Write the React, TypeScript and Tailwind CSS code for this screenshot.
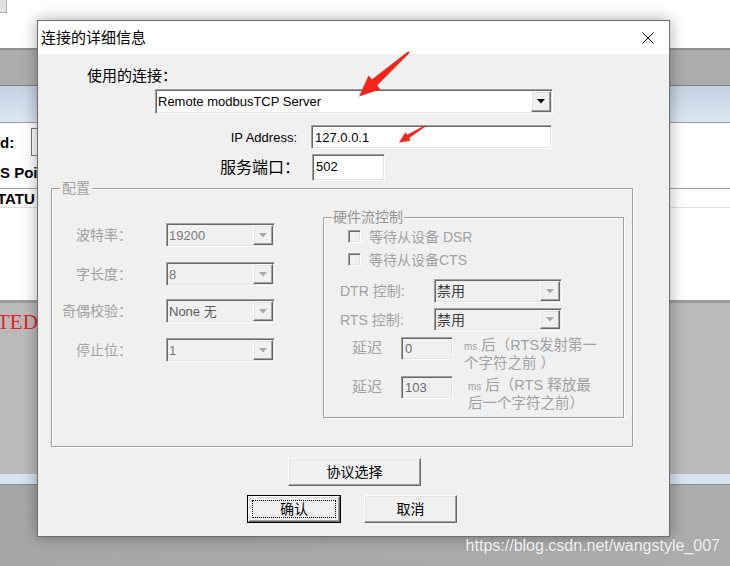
import React from 'react'

const sunken =
  'border border-t-[#a0a0a0] border-l-[#a0a0a0] border-b-white border-r-white shadow-[inset_1px_1px_0_#696969,inset_-1px_-1px_0_#e3e3e3]'
const raised =
  'border border-t-white border-l-white border-b-[#696969] border-r-[#696969] shadow-[inset_-1px_-1px_0_#a0a0a0,inset_1px_1px_0_#e3e3e3]'
const etched = 'border border-[#a0a0a0] shadow-[inset_1px_1px_0_#fff,1px_1px_0_#fff]'

function Combo({ value, className, textClass, arrow }: { value: string; className: string; textClass: string; arrow: string }) {
  return (
    <div className={`flex items-stretch p-[1px] ${sunken} ${className}`}>
      <div className={`flex-1 flex items-center pl-[1px] leading-none ${textClass}`}>{value}</div>
      <div className={`w-[20px] flex items-center justify-center bg-[#f0f0f0] ${raised}`}>
        <svg width="8" height="5" viewBox="0 0 8 5">
          <path d="M0 0h8L4 4.5z" fill={arrow} />
        </svg>
      </div>
    </div>
  )
}

function Field({ value, className, textClass }: { value: string; className: string; textClass: string }) {
  return (
    <div className={`flex items-center pl-[3px] ${sunken} ${className}`}>
      <span className={`leading-none ${textClass}`}>{value}</span>
    </div>
  )
}

function Check({ label }: { label: string }) {
  return (
    <div className="flex items-center h-[13px] ml-[24px]">
      <div className={`w-[13px] h-[13px] bg-[#f0f0f0] ${sunken}`} />
      <span className="ml-[8px] text-[14px] leading-none text-[#a0a0a0]">{label}</span>
    </div>
  )
}

function Button({ label, className, isDefault }: { label: string; className: string; isDefault?: boolean }) {
  if (isDefault) {
    return (
      <div className={`border border-black ${className}`}>
        <div className={`h-full flex items-center justify-center bg-[#f0f0f0] ${raised}`}>
          <div className="w-[84px] h-[18px] border border-dotted border-black flex items-center justify-center text-[14px] leading-none">
            {label}
          </div>
        </div>
      </div>
    )
  }
  return (
    <div className={`flex items-center justify-center bg-[#f0f0f0] text-[14px] leading-none ${raised} ${className}`}>
      {label}
    </div>
  )
}

function ConfigRow({ label, value, className, valueClass }: { label: string; value: string; className: string; valueClass: string }) {
  return (
    <div className={`flex items-center h-[24px] ${className}`}>
      <div className="w-[80px] text-right text-[14px] text-[#a0a0a0] leading-none">{label}</div>
      <Combo value={value} className="ml-[34px] w-[109px] h-[24px]" textClass={`text-[13px] ${valueClass}`} arrow="#a8a8a8" />
    </div>
  )
}

function Background() {
  return (
    <div className="flex flex-col h-full">
      <div className="h-[48px] bg-white">
        <div className="w-[7px] h-[13px] bg-[#e1e1e1] border-r border-b border-[#adadad]" />
      </div>
      <div className="h-[38px] bg-[#acacac] border-t-2 border-t-[#919191] border-b border-b-[#7d7d7d]" />
      <div className="h-[37px] bg-gradient-to-b from-[#c3d2e1] to-[#dce7f2] border-b border-[#9a9a9a]" />
      <div className="h-[177px] bg-white font-bold text-[15px] text-black">
        <div className="h-[38px] flex items-center">
          <span className="w-[31px] leading-none">d:</span>
          <div className="w-[20px] h-[28px] border border-[#7a7a7a] bg-white" />
        </div>
        <div className="h-[27px] flex items-center pb-[4px] leading-none">S Poi</div>
        <div className="h-[20px] flex items-center border-t border-[#a0a0a0] border-b border-b-[#dcdcdc] leading-none ml-[-3px]">
          TATU
        </div>
      </div>
      <div className="h-[174px] bg-[#bababa] border-t-[3px] border-[#9c9c9c]">
        <div className="mt-[9px] ml-[-3px] text-[21px] leading-[20px] text-[#e52222] font-['Liberation_Serif',serif]">TED</div>
      </div>
      <div className="h-[11px] bg-[#d6e3f0] border-b border-[#8a8a8a]" />
      <div className="flex-1 bg-gradient-to-r from-[#a6a6a6] to-[#acacac]" />
    </div>
  )
}

function Dialog() {
  return (
    <div className="absolute left-[37px] top-[20px] w-[633px] h-[517px] border border-[#6f6f6f] bg-[#f0f0f0] shadow-[0_0_14px_rgba(0,0,0,0.35)] flex flex-col">
      <div className="h-[33px] bg-white flex items-center justify-between pl-[3px] pr-[15px]">
        <span className="text-[15px] leading-none text-black">连接的详细信息</span>
        <svg width="12" height="12" viewBox="0 0 12 12">
          <path d="M0.5 0.5L11.5 11.5M11.5 0.5L0.5 11.5" stroke="#000" strokeWidth="1" />
        </svg>
      </div>

      <div className="flex-1 flex flex-col text-black">
        <div className="mt-[12px] ml-[49px] h-[20px] text-[15px] leading-[20px]">使用的连接：</div>
        <Combo value="Remote modbusTCP Server" className="mt-[3px] ml-[117px] w-[398px] h-[25px] bg-white" textClass="text-[13px] text-black" arrow="#000" />

        <div className="mt-[11px] flex items-center h-[24px]">
          <div className="w-[259px] text-right text-[13px] leading-none">IP Address:</div>
          <Field value="127.0.0.1" className="ml-[14px] w-[241px] h-[24px] bg-white" textClass="text-[13px]" />
        </div>
        <div className="mt-[5px] flex items-center h-[27px]">
          <div className="w-[262px] text-right text-[16px] leading-none">服务端口：</div>
          <Field value="502" className="ml-[12px] w-[73px] h-[27px] bg-white items-start pt-[5px]" textClass="text-[13px]" />
        </div>

        <div className={`relative mt-[7px] ml-[13px] w-[582px] h-[259px] flex items-start ${etched}`}>
          <span className="absolute left-[8px] top-[-11px] px-[2px] bg-[#f0f0f0] text-[14px] leading-[20px] text-[#a0a0a0]">配置</span>

          <div className="w-[271px] flex flex-col">
            <ConfigRow label="波特率：" value="19200" className="mt-[34px]" valueClass="text-[#7a7a7a]" />
            <ConfigRow label="字长度：" value="8" className="mt-[15px]" valueClass="text-[#7a7a7a]" />
            <ConfigRow label="奇偶校验：" value="None 无" className="mt-[13px]" valueClass="text-[#5c5c5c]" />
            <ConfigRow label="停止位：" value="1" className="mt-[15px]" valueClass="text-[#7a7a7a]" />
          </div>

          <div className={`relative mt-[28px] w-[301px] h-[201px] flex flex-col ${etched}`}>
            <span className="absolute left-[8px] top-[-11px] px-[1px] bg-[#f0f0f0] text-[14px] leading-[20px] text-[#939393]">硬件流控制</span>
            <div className="mt-[12px]">
              <Check label="等待从设备 DSR" />
            </div>
            <div className="mt-[10px]">
              <Check label="等待从设备CTS" />
            </div>

            <div className="mt-[13px] flex items-center h-[24px]">
              <span className="ml-[16px] w-[94px] text-[14px] leading-none text-[#a0a0a0]">DTR 控制:</span>
              <Combo value="禁用" className="w-[128px] h-[24px]" textClass="text-[14px] text-[#3c3c3c]" arrow="#a8a8a8" />
            </div>
            <div className="mt-[5px] flex items-center h-[23px]">
              <span className="ml-[16px] w-[94px] text-[14px] leading-none text-[#a0a0a0]">RTS 控制:</span>
              <Combo value="禁用" className="w-[128px] h-[23px]" textClass="text-[14px] text-[#3c3c3c]" arrow="#a8a8a8" />
            </div>

            <div className="mt-[6px] h-[32px] flex items-start">
              <span className="ml-[28px] w-[49px] h-[20px] flex items-center text-[15px] leading-none text-[#a0a0a0]">延迟</span>
              <Field value="0" className="w-[52px] h-[23px] bg-[#f0f0f0]" textClass="text-[13px] text-[#6a6a6a]" />
              <div className="ml-[11px] text-[14.5px] leading-[16px] text-[#a0a0a0]">
                <div>
                  <span className="text-[10px]">ms</span> 后（RTS发射第一
                </div>
                <div>个字符之前 ）</div>
              </div>
            </div>
            <div className="mt-[7px] flex items-start">
              <span className="ml-[28px] w-[49px] h-[20px] flex items-center text-[15px] leading-none text-[#a0a0a0]">延迟</span>
              <Field value="103" className="w-[52px] h-[23px] bg-[#f0f0f0]" textClass="text-[13px] text-[#6a6a6a]" />
              <div className="ml-[15px] mt-[1px] text-[14.5px] leading-[16px] text-[#a0a0a0]">
                <div>
                  <span className="text-[10px]">ms</span> 后（RTS 释放最
                </div>
                <div>后一个字符之前）</div>
              </div>
            </div>
          </div>
        </div>

        <Button label="协议选择" className="mt-[11px] ml-[250px] w-[133px] h-[28px]" />
        <div className="mt-[9px] ml-[209px] flex gap-[23px]">
          <Button label="确认" className="w-[94px] h-[28px]" isDefault />
          <Button label="取消" className="w-[93px] h-[28px]" />
        </div>
      </div>
    </div>
  )
}

export default function App() {
  return (
    <div className="relative w-[730px] h-[566px] overflow-hidden bg-white font-['Liberation_Sans','Noto_Sans_CJK_SC',sans-serif]">
      <Background />
      <Dialog />

      <svg className="absolute left-0 top-0 pointer-events-none" width="730" height="566" viewBox="0 0 730 566">
        <polygon
          points="409.7,52.8 377.1,85.4 380.4,89.2 359,96.5 368.6,75.6 371.9,79.4 408.3,51.2"
          fill="#f5241a"
        />
        <polygon
          points="425.4,126.6 409,138.2 410.6,140.8 399,142.5 405.4,132.2 407,134.8 424.6,125.4"
          fill="#f5241a"
        />
      </svg>

      <div className="absolute right-[10px] bottom-[10px] text-[16px] leading-[20px] text-[#f3f3f3] [text-shadow:0_0_1px_rgba(0,0,0,0.15)]">
        https://blog.csdn.net/wangstyle_007
      </div>
    </div>
  )
}
